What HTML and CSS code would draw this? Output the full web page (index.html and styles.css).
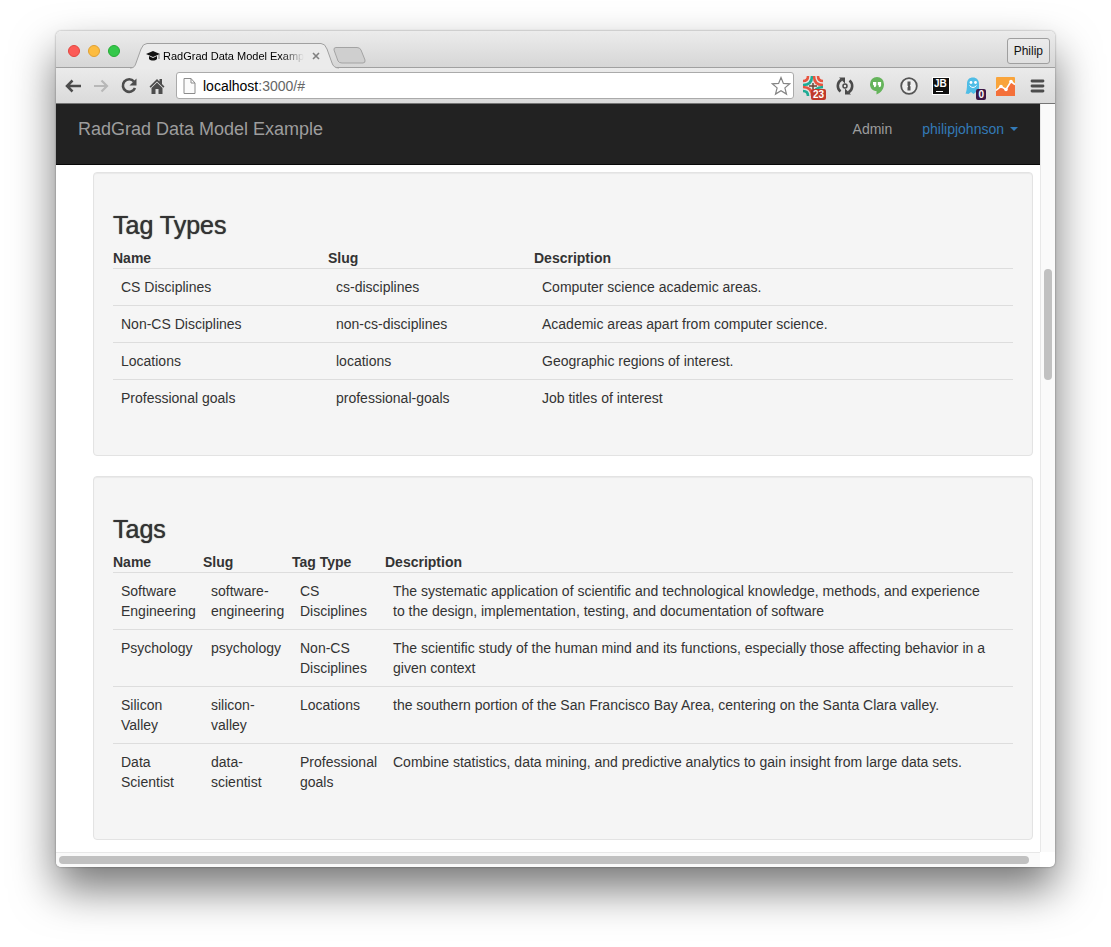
FILE: index.html
```html
<!DOCTYPE html>
<html lang="en">
<head>
<meta charset="utf-8">
<title>RadGrad Data Model Example</title>
<link rel="stylesheet" href="styles.css">
</head>
<body>
<div class="window">
  <div class="titlebar">
    <div class="lights">
      <button class="light light-close" aria-label="Close"></button>
      <button class="light light-min" aria-label="Minimize"></button>
      <button class="light light-max" aria-label="Zoom"></button>
    </div>
    <div class="tab">
      <svg class="tab-shape" width="210" height="26" viewBox="0 0 210 26" aria-hidden="true">
        <path d="M0 25C4 25 5 23 6 20L11 6Q13 .5 17 .5H191Q195 .5 197 6L202 20C203 23 205 25 209 25V26H0Z" fill="#ebebeb"/>
        <path d="M0 25C4 25 5 23 6 20L11 6Q13 .5 17 .5H191Q195 .5 197 6L202 20C203 23 205 25 209 25" fill="none" stroke="#a0a0a0"/>
      </svg>
      <svg class="favicon" width="15" height="12" viewBox="0 0 15 12" aria-hidden="true">
        <path d="M0 4L7 1l7 3-7 3Z" fill="#111"/><path d="M3 6v3c2 2 6 2 8 0V6L7 8Z" fill="#111"/><path d="M13 4v5" stroke="#777"/>
      </svg>
      <span class="tab-title">RadGrad Data Model Example</span>
      <button class="icon-btn tab-close" aria-label="Close tab">
        <svg width="8" height="8" viewBox="0 0 8 8"><path d="M1 1l6 6M7 1L1 7" stroke="#808080" stroke-width="1.6"/></svg>
      </button>
    </div>
    <button class="icon-btn new-tab" aria-label="New tab">
      <svg width="33" height="17" viewBox="0 0 33 17"><path d="M3 .5H24Q27 .5 28 3L32 13Q32.500 16 30 16H9Q6 16 5 14L1 3Q.5 .5 3 .5Z" fill="#cfcfcf" stroke="#a3a3a3"/></svg>
    </button>
    <button class="profile">Philip</button>
  </div>

  <div class="toolbar">
    <div class="nav-buttons">
      <button class="icon-btn" aria-label="Back"><svg width="18" height="18" viewBox="0 0 18 18"><path d="M17 9H3M8.500 3.500L3 9l5.500 5.500" fill="none" stroke="#4d4d4d" stroke-width="2.500"/></svg></button>
      <button class="icon-btn" aria-label="Forward"><svg width="18" height="18" viewBox="0 0 18 18"><path d="M2 9h13M9.500 3.500L15 9l-5.500 5.500" fill="none" stroke="#b8b8b8" stroke-width="2.200"/></svg></button>
      <button class="icon-btn" aria-label="Reload"><svg width="18" height="18" viewBox="0 0 18 18"><path d="M14 4.500A6.300 6.300 0 1 0 15 11" fill="none" stroke="#4d4d4d" stroke-width="2.600"/><path d="M16.500 1.500V8.500H9.500Z" fill="#4d4d4d"/></svg></button>
      <button class="icon-btn" aria-label="Home"><svg width="18" height="18" viewBox="0 0 18 18"><path d="M9 2L1.500 9.500l1.200 1.200L9 4.500l6.300 6.200 1.200-1.200-2.500-2.500V2h-2.500v2.500Z" fill="#4d4d4d"/><path d="M9 5.500l5.500 5.500v6h-4v-5h-3v5h-4v-6Z" fill="#4d4d4d"/></svg></button>
    </div>
    <div class="address">
      <svg width="13" height="16" viewBox="0 0 13 16" aria-hidden="true"><path d="M1 .5H8L12 5V15.500H1ZM8 .5V5H12" fill="#fbfbfb" stroke="#8c8c8c"/></svg>
      <div class="url" role="textbox" aria-label="Address" contenteditable="true" spellcheck="false">localhost<span class="url-rest">:3000/#</span></div>
      <button class="icon-btn" aria-label="Bookmark this page"><svg width="20" height="20" viewBox="0 0 20 20"><path d="M10 1.500l2.400 5.900 6.400.4-4.900 4.100 1.600 6.200L10 14.700l-5.500 3.400 1.600-6.200L1.200 7.800l6.400-.4Z" fill="#fff" stroke="#858585" stroke-width="1.200"/></svg></button>
    </div>
    <div class="extensions">
      <button class="icon-btn ext" aria-label="Feed, 23 items">
        <svg width="20" height="20" viewBox="0 0 20 20" fill="none" stroke-width="2.600"><path d="M0 5Q5 5 5 0" stroke="#e8543f"/><path d="M0 9Q9 9 9 0" stroke="#1fab94"/><path d="M20 5Q15 5 15 0M20 9Q11 9 11 0" stroke="#e8543f"/><path d="M0 15Q5 15 5 20" stroke="#1fab94"/><path d="M0 11Q9 11 9 20" stroke="#e8543f"/><path d="M20 15Q15 15 15 20M20 11Q11 11 11 20" stroke="#1fab94"/><path d="M6 10h8M10 7v6" stroke="#6b4636" stroke-width="1.500"/></svg>
        <span class="badge badge-red">23</span>
      </button>
      <button class="icon-btn ext" aria-label="Sync"><svg width="20" height="20" viewBox="0 0 20 20"><path d="M5.500 15.500A7.200 7.200 0 0 1 6.500 3.600M14.500 4.500A7.200 7.200 0 0 1 13.500 16.400" fill="none" stroke="#4a4a4a" stroke-width="2.600"/><path d="M4 1.500H10V7.500ZM16 18.500H10V12.500Z" fill="#4a4a4a"/><circle cx="10" cy="10" r="2" fill="none" stroke="#4a4a4a" stroke-width="1.500"/></svg></button>
      <button class="icon-btn ext" aria-label="Hangouts"><svg width="20" height="20" viewBox="0 0 20 20"><path d="M10 1a7 7 0 0 0-7 7.200c0 4 3 6.800 6.500 6.800v3.500C13.500 17 17 13 17 8.200A7 7 0 0 0 10 1Z" fill="#65b45b"/><path d="M6 6h3.300v3.200Q9.300 11 7 11.200V9.200H6ZM10.800 6h3.300v3.200q0 1.800-2.300 2V9.200h-1Z" fill="#fff"/></svg></button>
      <button class="icon-btn ext" aria-label="Passwords"><svg width="20" height="20" viewBox="0 0 20 20"><circle cx="10" cy="10" r="7.800" fill="#eee" stroke="#555" stroke-width="1.800"/><path d="M8.500 5.500h3v3l-.7 1 .7 1v4h-3v-3l.7-1-.7-1Z" fill="#555"/></svg></button>
      <button class="icon-btn ext" aria-label="JetBrains"><span class="jb">JB</span></button>
      <button class="icon-btn ext" aria-label="Ghostery, 0 trackers">
        <svg width="20" height="20" viewBox="0 0 20 20"><path d="M4 8C4 3.500 6.500 1.500 10 1.500S16 4 16 8v9.500l-3-1.500-2.500 2-2.500-2-2.500 2-3-.5q1.500-3 1.500-9.500Z" fill="#4fbde6"/><circle cx="8" cy="6.500" r="1.400" fill="#fff"/><circle cx="12.500" cy="6.500" r="1.400" fill="#fff"/><path d="M6.500 9.500q3.500 4 7 0" fill="none" stroke="#fff"/></svg>
        <span class="badge badge-purple">0</span>
      </button>
      <button class="icon-btn ext" aria-label="Analytics"><svg width="20" height="20" viewBox="0 0 20 20"><rect x="1" y="1" width="19" height="19" rx="1" fill="#f9a43b"/><path d="M1 14l5-4 5 3 5-8 4 3v12H1Z" fill="#f4703a"/><path d="M1 14.500L6 10.500l5 3L16 5.500l4 3" fill="none" stroke="#fff" stroke-width="1.600"/><circle cx="6" cy="10.500" r="1.800" fill="#fff"/><circle cx="11" cy="13.500" r="1.800" fill="#fff"/><circle cx="16" cy="5.500" r="1.800" fill="#fff"/></svg></button>
      <button class="icon-btn ext" aria-label="Menu"><svg width="20" height="20" viewBox="0 0 20 20"><path d="M5 5h11M5 10h11M5 15h11" stroke="#4d4d4d" stroke-width="2.800" stroke-linecap="round"/></svg></button>
    </div>
  </div>

  <div class="viewport">
    <div class="page">
      <nav class="navbar">
        <a class="brand" href="#">RadGrad Data Model Example</a>
        <a class="nav-link" href="#">Admin</a>
        <a class="nav-link nav-user" href="#">philipjohnson <span class="caret"></span></a>
      </nav>
      <main class="content">
        <section class="well">
          <h3>Tag Types</h3>
          <table class="types">
            <colgroup><col class="type-name"><col class="type-slug"><col></colgroup>
            <thead><tr><th>Name</th><th>Slug</th><th>Description</th></tr></thead>
            <tbody>
              <tr><td>CS Disciplines</td><td>cs-disciplines</td><td>Computer science academic areas.</td></tr>
              <tr><td>Non-CS Disciplines</td><td>non-cs-disciplines</td><td>Academic areas apart from computer science.</td></tr>
              <tr><td>Locations</td><td>locations</td><td>Geographic regions of interest.</td></tr>
              <tr><td>Professional goals</td><td>professional-goals</td><td>Job titles of interest</td></tr>
            </tbody>
          </table>
        </section>
        <section class="well">
          <h3>Tags</h3>
          <table class="tags">
            <colgroup><col class="tag-name"><col class="tag-slug"><col class="tag-type"><col></colgroup>
            <thead><tr><th>Name</th><th>Slug</th><th>Tag Type</th><th>Description</th></tr></thead>
            <tbody>
              <tr><td>Software Engineering</td><td>software-engineering</td><td>CS Disciplines</td><td>The systematic application of scientific and technological knowledge, methods, and experience to the design, implementation, testing, and documentation of software</td></tr>
              <tr><td>Psychology</td><td>psychology</td><td>Non-CS Disciplines</td><td>The scientific study of the human mind and its functions, especially those affecting behavior in a given context</td></tr>
              <tr><td>Silicon Valley</td><td>silicon-valley</td><td>Locations</td><td>the southern portion of the San Francisco Bay Area, centering on the Santa Clara valley.</td></tr>
              <tr><td>Data Scientist</td><td>data-scientist</td><td>Professional goals</td><td>Combine statistics, data mining, and predictive analytics to gain insight from large data sets.</td></tr>
            </tbody>
          </table>
        </section>
      </main>
    </div>
    <div class="vtrack"><div class="vthumb"></div></div>
    <div class="htrack"><div class="hthumb"></div></div>
    <div class="corner"></div>
  </div>
</div>
</body>
</html>
```
FILE: styles.css
```css
* { box-sizing: border-box; }

body {
  margin: 0;
  padding: 31px 56px 80px;
  background: #fff;
  color: #333;
  font: 14px/20px "Helvetica Neue", "Liberation Sans", Arial, sans-serif;
}

a { text-decoration: none; }
svg { display: block; }

.window {
  border-radius: 5px;
  overflow: hidden;
  background: #fff;
  box-shadow: 0 0 2px rgba(0, 0, 0, .45), 0 22px 44px rgba(0, 0, 0, .54);
}

.icon-btn {
  display: flex;
  align-items: center;
  justify-content: center;
  padding: 0;
  border: 0;
  background: none;
}

/* Title bar */
.titlebar {
  display: flex;
  align-items: flex-end;
  height: 37px;
  padding: 0 5px 0 12px;
  border-bottom: 1px solid #a0a0a0;
  background: linear-gradient(#ececec, #d6d6d6);
}

.lights {
  display: flex;
  gap: 8px;
  width: 62px;
  padding-bottom: 10px;
}

.light {
  width: 12px;
  height: 12px;
  padding: 0;
  border: 1px solid;
  border-radius: 50%;
}

.light-close { background: #fc5b57; border-color: #e2463f; }
.light-min { background: #fdbc40; border-color: #e0a032; }
.light-max { background: #34c84a; border-color: #26ab35; }

.tab {
  position: relative;
  display: flex;
  align-items: center;
  width: 203px;
  height: 25px;
  margin-bottom: -1px;
  padding: 0 13px 0 16px;
}

.tab-shape { position: absolute; left: 0; top: 0; }
.favicon, .tab-title, .tab-close { position: relative; }
.favicon { flex: none; }

.tab-title {
  flex: 1;
  min-width: 0;
  margin-left: 2px;
  overflow: hidden;
  white-space: nowrap;
  font-size: 11px;
  color: #000;
  -webkit-mask-image: linear-gradient(90deg, #000 84%, transparent);
  mask-image: linear-gradient(90deg, #000 84%, transparent);
}

.tab-close { margin-left: 8px; }
.new-tab { margin-bottom: 3px; }

.profile {
  height: 26px;
  margin: 0 0 3px auto;
  padding: 0 6px;
  border: 1px solid #9f9f9f;
  border-radius: 3px;
  background: linear-gradient(#ececec, #e0e0e0);
  color: #111;
  font: 12px/20px "Liberation Sans", Arial, sans-serif;
}

/* Toolbar */
.toolbar {
  display: flex;
  align-items: center;
  height: 36px;
  padding: 0 8px;
  border-bottom: 1px solid #757575;
  background: linear-gradient(#ebebeb, #dadada);
}

.nav-buttons { display: flex; gap: 10px; width: 112px; }

.address {
  display: flex;
  flex: 1;
  align-items: center;
  height: 27px;
  padding: 0 2px 0 6px;
  border: 1px solid #aaa;
  border-radius: 3px;
  background: #fff;
}

.url { flex: 1; margin-left: 7px; color: #000; outline: none; }
.url-rest { color: #666; }

.extensions { display: flex; gap: 12px; margin-left: 9px; }
.ext { position: relative; width: 20px; height: 20px; }

.badge {
  position: absolute;
  right: -3px;
  bottom: -4px;
  height: 11px;
  padding: 0 2px;
  border-radius: 2px;
  color: #fff;
  font: bold 10px/11px "Liberation Sans", Arial, sans-serif;
}

.badge-red { background: #c0392b; }
.badge-purple { background: #3b1746; }

.jb {
  width: 18px;
  height: 18px;
  padding: 1px 0 0 1px;
  border: 1px solid #fff;
  background: linear-gradient(#fff, #fff) 3px 13px / 7px 1px no-repeat #111;
  color: #fff;
  font: bold 10px/10px "Liberation Sans", Arial, sans-serif;
  text-align: left;
}

/* Page area with scroll tracks */
.viewport {
  display: grid;
  grid-template-columns: minmax(0, 1fr) 15px;
  grid-template-rows: auto 15px;
}

.vtrack {
  padding: 165px 3px 0;
  border-left: 1px solid #e8e8e8;
  background: #fafafa;
}

.vthumb { height: 111px; border-radius: 4px; background: #c1c1c1; }

.htrack {
  padding: 3px 11px 0 3px;
  border-top: 1px solid #e8e8e8;
  background: #fafafa;
}

.hthumb { height: 8px; border-radius: 4px; background: #c1c1c1; }

.navbar {
  display: flex;
  gap: 30px;
  height: 61px;
  padding: 15px 22px 0;
  border-bottom: 1px solid #080808;
  background: #222;
}

.brand { margin-right: auto; color: #9d9d9d; font-size: 18px; }
.nav-link { color: #9d9d9d; }
.nav-user { display: flex; align-items: center; gap: 6px; height: 20px; color: #337ab7; }

.caret {
  border: 4px solid transparent;
  border-top-color: #337ab7;
  border-bottom: 0;
}

.content {
  display: flex;
  flex-direction: column;
  gap: 20px;
  padding: 7px 7px 12px 37px;
}

.well {
  padding: 19px;
  border: 1px solid #e3e3e3;
  border-radius: 4px;
  background: #f5f5f5;
  box-shadow: inset 0 1px 1px rgba(0, 0, 0, .05);
}

.well h3 {
  margin: 20px 0 10px;
  font-size: 25px;
  line-height: 26px;
  font-weight: 500;
  text-shadow: 0 0 1px #333;
}

table {
  width: 100%;
  margin-bottom: 20px;
  border-collapse: separate;
  border-spacing: 0;
  table-layout: fixed;
}

th { padding: 0; text-align: left; }
td { padding: 8px; border-top: 1px solid #ddd; vertical-align: top; }
td:last-child { padding-right: 20px; }

.type-name { width: 215px; }
.type-slug { width: 206px; }
.tag-name { width: 90px; }
.tag-slug { width: 89px; }
.tag-type { width: 93px; }
```
